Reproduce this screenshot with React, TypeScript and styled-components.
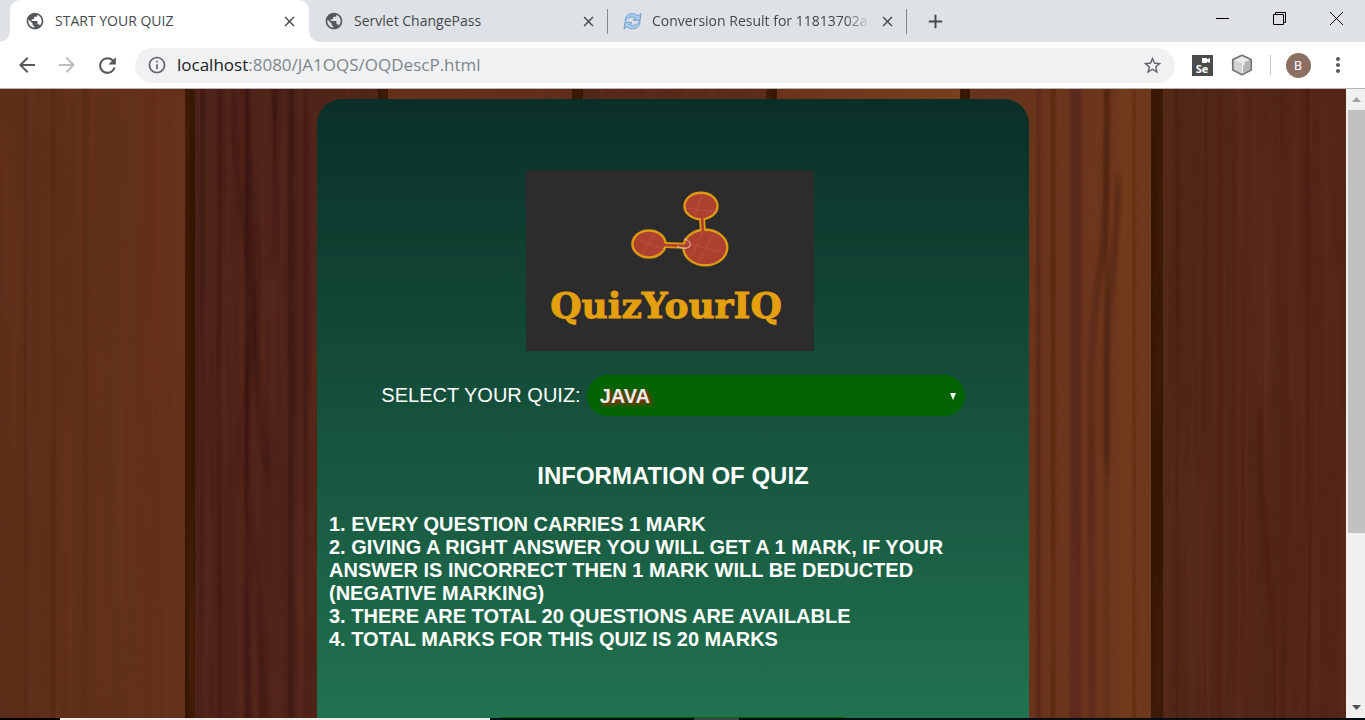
import React from 'react';
import styled, { createGlobalStyle, css } from 'styled-components';
import {
  MdAdd,
  MdArrowBack,
  MdArrowForward,
  MdClose,
  MdInfoOutline,
  MdMoreVert,
  MdPublic,
  MdRefresh,
  MdStarBorder,
} from 'react-icons/md';

const GlobalStyle = createGlobalStyle`
  *, *::before, *::after { box-sizing: border-box; }
  body { margin: 0; overflow: hidden; }
  button { border: 0; padding: 0; background: none; color: inherit; font: inherit; }
  h1, h2, ul, p { margin: 0; padding: 0; }
`;

const uiFont = css`
  font-family: 'Open Sans', 'Noto Sans', sans-serif;
`;

const Browser = styled.div`
  display: flex;
  flex-direction: column;
  height: 100vh;
  ${uiFont}
`;

/* Tab strip */

const TabStrip = styled.header`
  display: flex;
  flex: 0 0 42px;
  padding-left: 10px;
  background: #dee1e6;
  color: #45494d;
`;

const Tab = styled.div<{ $active?: boolean; $divided?: boolean }>`
  position: relative;
  display: flex;
  align-items: center;
  flex: 0 1 299px;
  min-width: 0;
  gap: 10px;
  padding: 0 10px 0 15px;
  font-size: 14px;
  line-height: 20px;

  ${({ $active }) =>
    $active &&
    css`
      background: #fff;
      border-radius: 10px 10px 0 0;

      &::before,
      &::after {
        content: '';
        position: absolute;
        bottom: 0;
        width: 10px;
        height: 10px;
      }
      &::before {
        right: 100%;
        background: radial-gradient(circle at 0 0, transparent 9px, #fff 10px);
      }
      &::after {
        left: 100%;
        background: radial-gradient(circle at 100% 0, transparent 9px, #fff 10px);
      }
    `}

  ${({ $divided }) =>
    $divided &&
    css`
      &::after {
        content: '';
        position: absolute;
        right: 0;
        top: 9px;
        width: 1px;
        height: 25px;
        background: #85888c;
      }
    `}
`;

const TabTitle = styled.span<{ $fade?: boolean }>`
  flex: 1;
  min-width: 0;
  margin-right: -4px;
  overflow: hidden;
  white-space: nowrap;
  ${({ $fade }) =>
    $fade && 'mask-image: linear-gradient(to right, #000 calc(100% - 26px), transparent);'}
`;

const TabButton = styled.button`
  display: grid;
  place-items: center;
  flex: 0 0 20px;
  height: 20px;
  color: #45494d;
`;

const NewTab = styled(TabButton)`
  flex-basis: 56px;
  height: 42px;
`;

const WindowControls = styled.div`
  display: flex;
  margin-left: auto;
`;

const WindowButton = styled.button`
  display: grid;
  place-items: center;
  width: 57px;
  height: 37px;
  color: #000;
`;

/* Toolbar */

const Toolbar = styled.nav`
  display: flex;
  align-items: center;
  flex: 0 0 47px;
  padding: 0 7px;
  background: #fff;
  border-bottom: 1px solid #b9b4b2;
  color: #5f6368;
`;

const ToolButton = styled.button<{ $muted?: boolean }>`
  display: grid;
  place-items: center;
  flex: 0 0 40px;
  height: 40px;
  color: ${({ $muted }) => ($muted ? '#bcbec1' : '#55595e')};
`;

const Omnibox = styled.div`
  display: flex;
  align-items: center;
  flex: 1;
  height: 35px;
  margin: 0 7px 0 8px;
  padding: 0 12px;
  gap: 10px;
  border-radius: 18px;
  background: #eff1f3;
`;

const Address = styled.div`
  flex: 1;
  font-size: 17px;
  line-height: 24px;
  color: #80868b;

  b {
    font-weight: 400;
    color: #202124;
  }
`;

const Separator = styled.span`
  flex: 0 0 1px;
  height: 20px;
  margin: 0 7px 0 8px;
  background: #c8cacd;
`;

const Avatar = styled.span`
  display: grid;
  place-items: center;
  width: 25px;
  height: 25px;
  border-radius: 50%;
  background: #8d6e63;
  color: #fff;
  font: 13px/25px Roboto, sans-serif;
`;

/* Page viewport */

const Viewport = styled.div`
  display: flex;
  flex: 1;
  min-height: 0;
`;

const Page = styled.main`
  position: relative;
  flex: 1;
  min-width: 0;
  overflow: hidden;
  padding: 10px 0;
  background: #4c2014;
  color: #fff;
  font-family: 'Liberation Sans', Arial, sans-serif;
`;

const WoodArt = styled.svg`
  position: absolute;
  inset: 0;
  width: 100%;
  height: 100%;
`;

const Panel = styled.form`
  position: relative;
  width: 90%;
  max-width: 712px;
  margin: 0 auto;
  padding: 71px 12px 40px;
  border-radius: 25px;
  background: linear-gradient(#0a2f28, #217250 620px);
`;

const LogoRow = styled.div`
  display: flex;
  justify-content: center;
  padding-right: 6px;
`;

const Logo = styled.div`
  display: flex;
  flex-direction: column;
  align-items: center;
  width: 288px;
  height: 181px;
  padding: 18px 8px 0 0;
  background: #2c2c2c;
`;

const LogoName = styled.h1`
  margin-top: 15px;
  color: #e5a00f;
  font: bold 36px/40px 'DejaVu Serif', serif;
  -webkit-text-stroke: 1px #e5a00f;
`;

const Field = styled.div`
  display: flex;
  align-items: center;
  justify-content: center;
  gap: 6px;
  margin-top: 24px;
  font-size: 20px;
`;

const SelectBox = styled.div`
  position: relative;
  width: 378px;

  svg {
    position: absolute;
    right: 8px;
    top: 17px;
    pointer-events: none;
  }
`;

const Select = styled.select`
  appearance: none;
  display: block;
  width: 100%;
  height: 41px;
  padding: 0 13px;
  border: 0;
  border-radius: 21px;
  background: #046404;
  color: #ececec;
  font: bold 20px 'Liberation Sans', Arial, sans-serif;
  text-shadow: 2px 2px 4px #d01800;
`;

const Heading = styled.h2`
  margin: 46px 0 23px;
  font-size: 24px;
  line-height: 28px;
  text-align: center;
`;

const Rules = styled.ul`
  list-style: none;
  font-size: 20px;
  font-weight: bold;
  line-height: 23px;
`;

const StartButton = styled.button`
  display: block;
  width: 378px;
  height: 41px;
  margin: 66px auto 0;
  border-radius: 21px;
  background: #046404;
`;

const Scrollbar = styled.div`
  display: flex;
  flex-direction: column;
  flex: 0 0 19px;
  padding-left: 2px;
  background: #f0f0f0;
`;

const ScrollButton = styled.button`
  display: grid;
  place-items: center;
  flex: 0 0 21px;
`;

const ScrollTrack = styled.div`
  flex: 1;
`;

const ScrollThumb = styled.div`
  height: 72%;
  background: #c1c1c1;
`;

const Taskbar = styled.footer`
  display: grid;
  grid-template-columns: 60px 430px 204px 45px 1fr;
  flex: 0 0 2px;
  background: #050d12;
`;

const TaskbarItem = styled.span<{ $tone: string }>`
  background: ${({ $tone }) => $tone};
`;

/* Drawings */

const planks = [
  { x: 0, w: 185, a: '#5c2d18', b: '#64321a' },
  { x: 195, w: 183, a: '#4a2118', b: '#512419' },
  { x: 388, w: 184, a: '#663219', b: '#5d2c19' },
  { x: 583, w: 183, a: '#53261b', b: '#5d2c19' },
  { x: 777, w: 183, a: '#6d3219', b: '#78421e' },
  { x: 970, w: 181, a: '#66321c', b: '#6f391c' },
  { x: 1163, w: 183, a: '#4f2716', b: '#532417' },
];

const veins = [
  { x: 24, w: 2, c: '#4d2413' }, { x: 52, w: 2, c: '#522815' }, { x: 84, w: 3, c: '#502716' },
  { x: 140, w: 22, c: '#652f19' }, { x: 202, w: 2, c: '#32160f' }, { x: 218, w: 3, c: '#38130e' },
  { x: 245, w: 4, c: '#39100b' }, { x: 289, w: 7, c: '#35100a' }, { x: 305, w: 2, c: '#33130e' },
  { x: 1037, w: 3, c: '#4c210e' }, { x: 1051, w: 4, c: '#522408' }, { x: 1070, w: 11, c: '#54251a' },
  { x: 1105, w: 3, c: '#562711' }, { x: 1133, w: 2, c: '#522107' }, { x: 1119, w: 12, c: '#74401d' },
  { x: 1176, w: 3, c: '#45200e' }, { x: 1203, w: 3, c: '#45190f' }, { x: 1219, w: 3, c: '#4b190f' },
  { x: 1236, w: 5, c: '#582b18' }, { x: 1282, w: 4, c: '#431a10' }, { x: 1306, w: 5, c: '#481f11' },
];

const Wood = () => (
  <WoodArt viewBox="0 0 1346 629" preserveAspectRatio="none" aria-hidden="true">
    <defs>
      {planks.map((p, i) => (
        <linearGradient key={p.x} id={`plank${i}`}>
          <stop offset="0" stopColor={p.a} />
          <stop offset="1" stopColor={p.b} />
        </linearGradient>
      ))}
      <filter id="soft" x="0" y="0" width="1" height="1">
        <feGaussianBlur stdDeviation="1.2 0" />
      </filter>
      <filter id="softVein" x="0" y="0" width="1" height="1">
        <feGaussianBlur stdDeviation="2 8" />
      </filter>
      <filter id="grain" x="0" y="0" width="1" height="1">
        <feTurbulence type="fractalNoise" baseFrequency="0.11 0.003" numOctaves="3" seed="8" />
        <feColorMatrix values="0 0 0 0 0.17  0 0 0 0 0.04  0 0 0 0 0.02  1.5 0 0 0 -0.55" />
      </filter>
    </defs>
    <rect width="1346" height="629" fill="#351600" />
    {planks.map((p, i) => (
      <rect key={p.x} x={p.x} width={p.w} height="629" fill={`url(#plank${i})`} />
    ))}
    <g filter="url(#soft)">
      {veins.map((v) => (
        <rect key={v.x} x={v.x} width={v.w} height="629" fill={v.c} opacity="0.7" />
      ))}
    </g>
    <g fill="none" stroke="#32100a" strokeWidth="4" opacity="0.55" filter="url(#softVein)">
      <path d="M230 -20C238 90 244 130 252 190C260 280 238 320 244 365C252 440 258 520 266 650" />
      <path d="M243 -20C244 70 256 110 258 190C252 270 262 330 268 390" />
      <path d="M276 -20C272 110 278 140 272 180" strokeWidth="9" />
      <path d="M1108 -20C1106 110 1108 140 1097 200C1087 260 1094 330 1092 650" />
      <path d="M1119 90C1115 180 1106 210 1107 290V380" />
      <path d="M1260 320C1258 440 1276 480 1276 650" strokeWidth="2" />
    </g>
    <rect width="1346" height="629" filter="url(#grain)" opacity="0.45" />
  </WoodArt>
);

const Molecule = () => (
  <svg width="128" height="82" viewBox="0 0 128 82" aria-hidden="true">
    <g transform="translate(-602 -188)">
      <path d="M664 245L692 246M702 218L703 232" stroke="#e0980f" strokeWidth="6" fill="none" />
      <g fill="#ae4030" stroke="#dc9a14" strokeWidth="2.4">
        <ellipse cx="701" cy="206" rx="16.5" ry="13.3" />
        <ellipse cx="649" cy="244" rx="16.6" ry="13.5" />
        <ellipse cx="705.300" cy="247.500" rx="22" ry="17.800" />
      </g>
      <path d="M664 245L688 246M702 217L703 233" stroke="#ae4030" strokeWidth="2.6" fill="none" />
      <g stroke="#d28370" strokeWidth="0.5" fill="none" opacity="0.5">
        <path d="M695 216L702 194M687 208L716 212M642 254L655 233M636 239L663 249" />
        <path d="M699 262L713 235M686 243L725 253M691 257L703 232" />
      </g>
      <path d="M684 239C689 240 691 243 690 246C688 249 681 249 677 246" stroke="#e7c5bd" strokeWidth="1" fill="none" />
    </g>
  </svg>
);

const SyncIcon = () => (
  <svg width="19" height="19" viewBox="0 0 19 19" aria-hidden="true">
    <g fill="#a9cdef" stroke="#5d8fc2" strokeWidth="0.8" strokeLinejoin="round">
      <path d="M2 9C2 3 8 0 13 2.500L15 4L18 1.500L17 8.500L10 8L12.500 6C9 3.800 5.500 5.500 2 9Z" />
      <path d="M17 9.500C17 15.500 11 18.500 6 16L4 14.500L1 17L2 10L9 10.500L6.500 12.500C10 14.700 13.500 13 17 9.500Z" />
    </g>
  </svg>
);

const SeleniumBadge = styled.span`
  position: relative;
  display: flex;
  align-items: flex-end;
  justify-content: center;
  width: 21px;
  height: 21px;
  background: #4b4b4b;
  color: #fff;
  font-size: 11px;
  font-weight: 700;
  line-height: 15px;

  svg {
    position: absolute;
    top: 3px;
    right: 3px;
  }
`;

const SeleniumIcon = () => (
  <SeleniumBadge>
    <svg width="8" height="5" viewBox="0 0 8 5" aria-hidden="true">
      <path d="M0 0H5V1.500L8 0V5L5 3.500V5H0Z" fill="#fff" />
    </svg>
    Se
  </SeleniumBadge>
);

const CubeIcon = () => (
  <svg width="22" height="22" viewBox="0 0 22 22" aria-hidden="true">
    <path d="M11 1.200L20.200 5.600V16L11 20.800L1.800 16V5.600Z" fill="#d2d2d2" stroke="#777" strokeWidth="1.800" strokeLinejoin="round" />
    <path d="M11 2.500L18.600 6L11 9.500L3.400 6Z" fill="#e9e9e9" />
    <path d="M11 9.500L18.800 6V15.300L11 19.500Z" fill="#b4b4b4" />
    <path d="M11 9.500L13.500 8.400V10.500L12 12V19L11 19.500Z" fill="#f3f3f3" />
  </svg>
);

export default function App() {
  return (
    <Browser>
      <GlobalStyle />
      <TabStrip>
        <Tab $active>
          <MdPublic size={20} color="#55595e" />
          <TabTitle>START YOUR QUIZ</TabTitle>
          <TabButton aria-label="Close tab"><MdClose size={17} /></TabButton>
        </Tab>
        <Tab $divided>
          <MdPublic size={20} color="#55595e" />
          <TabTitle>Servlet ChangePass</TabTitle>
          <TabButton aria-label="Close tab"><MdClose size={17} /></TabButton>
        </Tab>
        <Tab $divided>
          <SyncIcon />
          <TabTitle $fade>Conversion Result for 11813702a</TabTitle>
          <TabButton aria-label="Close tab"><MdClose size={17} /></TabButton>
        </Tab>
        <NewTab aria-label="New tab"><MdAdd size={23} /></NewTab>
        <WindowControls>
          <WindowButton aria-label="Minimize">
            <svg width="13" height="13"><path d="M0 6.500H13" stroke="#000" /></svg>
          </WindowButton>
          <WindowButton aria-label="Restore">
            <svg width="13" height="13" fill="none" stroke="#000">
              <path d="M0.500 2.500H10.500V12.500H0.500ZM2.500 2.500V0.500H12.500V10.500H10.500" />
            </svg>
          </WindowButton>
          <WindowButton aria-label="Close window">
            <svg width="13" height="13"><path d="M0 0L13 13M13 0L0 13" stroke="#000" /></svg>
          </WindowButton>
        </WindowControls>
      </TabStrip>

      <Toolbar>
        <ToolButton aria-label="Back"><MdArrowBack size={24} /></ToolButton>
        <ToolButton aria-label="Forward" $muted><MdArrowForward size={24} /></ToolButton>
        <ToolButton aria-label="Reload"><MdRefresh size={25} /></ToolButton>
        <Omnibox>
          <MdInfoOutline size={20} />
          <Address><b>localhost</b>:8080/JA1OQS/OQDescP.html</Address>
          <MdStarBorder size={21} />
        </Omnibox>
        <ToolButton aria-label="Selenium IDE"><SeleniumIcon /></ToolButton>
        <ToolButton aria-label="Extension"><CubeIcon /></ToolButton>
        <Separator />
        <ToolButton aria-label="Profile"><Avatar>B</Avatar></ToolButton>
        <ToolButton aria-label="Menu"><MdMoreVert size={24} /></ToolButton>
      </Toolbar>

      <Viewport>
        <Page>
          <Wood />
          <Panel>
            <LogoRow>
              <Logo>
                <Molecule />
                <LogoName>QuizYourIQ</LogoName>
              </Logo>
            </LogoRow>
            <Field>
              <label htmlFor="quiz">SELECT YOUR QUIZ:</label>
              <SelectBox>
                <Select id="quiz" defaultValue="java">
                  <option value="java">JAVA</option>
                </Select>
                <svg width="8" height="8" viewBox="0 0 8 8" aria-hidden="true">
                  <path d="M1 1H7L4 8Z" fill="#fff" />
                </svg>
              </SelectBox>
            </Field>
            <Heading>INFORMATION OF QUIZ</Heading>
            <Rules>
              <li>1. EVERY QUESTION CARRIES 1 MARK</li>
              <li>
                2. GIVING A RIGHT ANSWER YOU WILL GET A 1 MARK, IF YOUR ANSWER IS INCORRECT THEN 1
                MARK WILL BE DEDUCTED (NEGATIVE MARKING)
              </li>
              <li>3. THERE ARE TOTAL 20 QUESTIONS ARE AVAILABLE</li>
              <li>4. TOTAL MARKS FOR THIS QUIZ IS 20 MARKS</li>
            </Rules>
            <StartButton type="button" aria-label="Start quiz" />
          </Panel>
        </Page>
        <Scrollbar>
          <ScrollButton aria-label="Scroll up">
            <svg width="9" height="5"><path d="M0 5L4.500 0L9 5Z" fill="#a3a3a3" /></svg>
          </ScrollButton>
          <ScrollTrack><ScrollThumb /></ScrollTrack>
          <ScrollButton aria-label="Scroll down">
            <svg width="9" height="5"><path d="M0 0L4.500 5L9 0Z" fill="#505050" /></svg>
          </ScrollButton>
        </Scrollbar>
      </Viewport>

      <Taskbar>
        <TaskbarItem $tone="#000" />
        <TaskbarItem $tone="#f0f0f0" />
        <TaskbarItem $tone="#050d12" />
        <TaskbarItem $tone="#3e4347" />
        <TaskbarItem $tone="#050d12" />
      </Taskbar>
    </Browser>
  );
}
